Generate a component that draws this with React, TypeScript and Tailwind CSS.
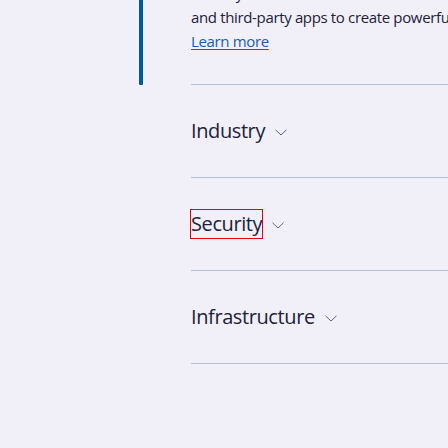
import React from 'react'

const items = ['Industry', 'Security', 'Infrastructure']

const Chevron: React.FC = () => (
  <svg width="12" height="7" viewBox="0 0 12 7" fill="none" className="ml-[10px] mt-[2px] shrink-0">
    <path d="M0.5 0.8 L6 6 L11.5 0.8" stroke="#55648a" strokeWidth="1" />
  </svg>
)

const App: React.FC = () => {
  return (
    <div className="w-[448px] h-[448px] overflow-hidden bg-[#f1f0f8] text-[#1c2238]" style={{ fontFamily: '"Open Sans", "Noto Sans", sans-serif' }}>
      <div className="flex pl-[139px]">
        <div className="w-[4px] h-[85px] bg-[#005a9e] rounded-b-[1px] shrink-0" />
        <div className="ml-[48px] w-[300px] h-[85px] border-b border-[#b8bfd0] shrink-0">
          <div className="mt-[-19px] text-[15px] leading-[24px] font-normal tracking-[-0.35px] whitespace-nowrap">
            <p>security solutions from Microsoft</p>
            <p>and third-party apps to create powerful</p>
            <a href="#" className="text-[#1a5bb0] underline underline-offset-[2px]">Learn more</a>
          </div>
        </div>
      </div>
      <ul className="ml-[191px] w-[300px]">
        {items.map((label) => (
          <li key={label} className="h-[93px] border-b border-[#b8bfd0] flex items-center">
            <button className="flex items-center text-[20px] leading-[28px] font-normal tracking-[-0.4px]">
              <span className={label === 'Security' ? 'outline outline-1 outline-[#e8000d]' : ''}>{label}</span>
              <Chevron />
            </button>
          </li>
        ))}
      </ul>
    </div>
  )
}

export default App
